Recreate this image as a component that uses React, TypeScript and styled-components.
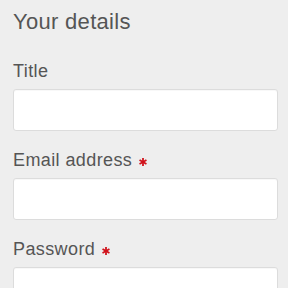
import React from 'react'
import styled, { createGlobalStyle } from 'styled-components'

const GlobalStyle = createGlobalStyle`
  html, body {
    margin: 0;
    padding: 0;
    background: #eeeeee;
  }
  body {
    font-family: 'Liberation Sans', Arial, sans-serif;
    color: #555555;
  }
`

const Page = styled.div`
  display: flex;
  flex-direction: column;
  padding: 9px 10px 0 13px;
  height: 288px;
  box-sizing: border-box;
  overflow: hidden;
`

const Heading = styled.h2`
  margin: 0 0 24px;
  font-size: 22px;
  font-weight: 400;
  line-height: 26px;
  letter-spacing: 0.3px;
  color: #555555;
`

const Field = styled.div`
  display: flex;
  flex-direction: column;
  margin-bottom: 17px;
`

const Label = styled.label`
  display: flex;
  align-items: center;
  font-size: 18px;
  line-height: 25px;
  letter-spacing: 0.4px;
  margin-bottom: 5px;
  color: #555555;
`

const Required = styled.svg`
  width: 8px;
  height: 8px;
  margin-left: 7px;
  margin-top: 2px;
  fill: #d0121b;
`

const Input = styled.input`
  height: 42px;
  box-sizing: border-box;
  border: 1px solid #dcdcdc;
  border-radius: 3px;
  background: #ffffff;
  padding: 0 10px;
  font-size: 16px;
  font-family: inherit;
  box-shadow: inset 0 1px 1px rgba(0, 0, 0, 0.03);
`

const Asterisk = () => (
  <Required viewBox="0 0 10 10">
    <rect x="3.9" y="0" width="2.2" height="10" />
    <rect x="3.9" y="0" width="2.2" height="10" transform="rotate(60 5 5)" />
    <rect x="3.9" y="0" width="2.2" height="10" transform="rotate(-60 5 5)" />
  </Required>
)

interface FormFieldProps {
  label: string
  type?: string
  required?: boolean
}

const FormField: React.FC<FormFieldProps> = ({ label, type = 'text', required }) => (
  <Field>
    <Label>
      {label}
      {required && <Asterisk />}
    </Label>
    <Input type={type} />
  </Field>
)

export default function App() {
  return (
    <Page>
      <GlobalStyle />
      <Heading>Your details</Heading>
      <FormField label="Title" />
      <FormField label="Email address" type="email" required />
      <FormField label="Password" type="password" required />
    </Page>
  )
}
